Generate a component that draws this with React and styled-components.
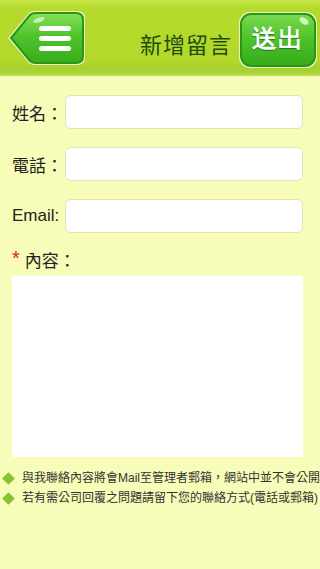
import React from "react";
import styled, { createGlobalStyle } from "styled-components";

const Global = createGlobalStyle`
  html, body {
    margin: 0;
    padding: 0;
    background: #f7fcb8;
  }
  body {
    font-family: "Liberation Sans", "Noto Sans CJK TC", sans-serif;
  }
  * { box-sizing: border-box; }
`;

const Page = styled.div`
  width: 320px;
  min-height: 569px;
  background: #f7fcb8;
  overflow: hidden;
`;

const Header = styled.header`
  height: 76px;
  display: flex;
  align-items: center;
  justify-content: space-between;
  padding: 2px 2px 2px 5px;
  background:
    linear-gradient(to bottom, #c8e84a 0, #b6da2c 7px, #b3d72a 62px, #a7d130 66px, #a9d232 72px, #bfe055 76px);
`;

const Title = styled.h1`
  margin: 10px 6px 0 auto;
  font-size: 22px;
  font-weight: normal;
  letter-spacing: 1px;
  color: #1f4e0c;
`;

const IconButton = styled.button`
  border: none;
  background: none;
  padding: 0;
  width: ${p => p.$w}px;
  height: 58px;
  margin-top: ${p => p.$top || 0}px;
  display: flex;
  align-items: center;
  justify-content: center;
  position: relative;
  cursor: pointer;
  svg { display: block; }
`;

const SendLabel = styled.span`
  position: absolute;
  inset: 0;
  display: flex;
  align-items: center;
  justify-content: center;
  padding-bottom: 3px;
  color: #fff;
  font-size: 25px;
  font-weight: bold;
  letter-spacing: 1px;
  text-shadow: 0 1px 1px #1f7a10;
`;

const Form = styled.main`
  padding: 19px 17px 0 12px;
  display: flex;
  flex-direction: column;
`;

const Row = styled.div`
  display: flex;
  align-items: center;
  margin-bottom: 18px;
`;

const Label = styled.label`
  width: 53px;
  flex: none;
  font-size: 17px;
  color: #222;
  white-space: nowrap;
`;

const Input = styled.input`
  flex: 1;
  height: 34px;
  border: 1px solid #e2e4b8;
  border-radius: 6px;
  background: #fff;
  padding: 0 8px;
  font-size: 15px;
  outline: none;
`;

const ContentLabel = styled.label`
  font-size: 17px;
  color: #222;
  margin-top: -4px;
  margin-bottom: 4px;
  display: flex;
  align-items: center;
`;

const Star = styled.span`
  color: #e02020;
  font-size: 20px;
  margin-right: 5px;
  position: relative;
  top: -1px;
`;

const TextArea = styled.textarea`
  height: 181px;
  border: none;
  background: #fff;
  resize: none;
  outline: none;
  padding: 6px;
  font-size: 15px;
`;

const Notes = styled.ul`
  list-style: none;
  margin: 14px 0 0;
  padding: 0 0 0 2px;
  display: flex;
  flex-direction: column;
  gap: 5px;
`;

const Note = styled.li`
  display: flex;
  align-items: center;
  gap: 8px;
  font-size: 12px;
  color: #333;
  white-space: nowrap;
  line-height: 15px;
`;

const Diamond = styled.span`
  width: 9px;
  height: 9px;
  margin: 0 1px 0 2px;
  background: #84c42c;
  transform: rotate(45deg);
  flex: none;
`;

const MenuIcon = () => (
  <svg width="82" height="58" viewBox="0 0 82 58">
    <defs>
      <linearGradient id="mg" x1="0" y1="0" x2="0" y2="1">
        <stop offset="0" stopColor="#86e05a" />
        <stop offset="0.45" stopColor="#4fc42a" />
        <stop offset="1" stopColor="#38ad1c" />
      </linearGradient>
    </defs>
    <path d="M3 29 L24 4 Q26 2 30 2 L72 2 Q80 2 80 10 L80 48 Q80 56 72 56 L30 56 Q26 56 24 54 Z" fill="#e9f7c8" />
    <path d="M6 29 L25 6 Q27 4 31 4 L71 4 Q78 4 78 11 L78 47 Q78 54 71 54 L31 54 Q27 54 25 52 Z" fill="url(#mg)" stroke="#2a9614" strokeWidth="2" />
    <ellipse cx="34" cy="11" rx="6" ry="2.5" fill="#d6f7c0" opacity="0.8" transform="rotate(-20 34 11)" />
    <rect x="34" y="17" width="32" height="5" rx="2.5" fill="#fff" />
    <rect x="34" y="27" width="32" height="5" rx="2.5" fill="#fff" />
    <rect x="34" y="37" width="32" height="5" rx="2.5" fill="#fff" />
  </svg>
);

const SendBg = () => (
  <svg width="80" height="58" viewBox="0 0 80 58">
    <defs>
      <linearGradient id="sg" x1="0" y1="0" x2="0" y2="1">
        <stop offset="0" stopColor="#7ad94e" />
        <stop offset="0.5" stopColor="#4cc22a" />
        <stop offset="1" stopColor="#35aa1b" />
      </linearGradient>
    </defs>
    <rect x="1" y="1" width="78" height="56" rx="11" fill="#e9f7c8" />
    <rect x="3" y="3" width="74" height="52" rx="10" fill="url(#sg)" stroke="#2a9614" strokeWidth="2" />
    <ellipse cx="66" cy="10" rx="5" ry="3" fill="#e6fbd8" opacity="0.85" transform="rotate(35 66 10)" />
  </svg>
);

export default function App() {
  return (
    <Page>
      <Global />
      <Header>
        <IconButton $w={82} aria-label="menu">
          <MenuIcon />
        </IconButton>
        <Title>新增留言</Title>
        <IconButton $w={80} $top={3}>
          <SendBg />
          <SendLabel>送出</SendLabel>
        </IconButton>
      </Header>
      <Form>
        <Row>
          <Label>姓名：</Label>
          <Input />
        </Row>
        <Row>
          <Label>電話：</Label>
          <Input />
        </Row>
        <Row>
          <Label>Email:</Label>
          <Input />
        </Row>
        <ContentLabel>
          <Star>*</Star>內容：
        </ContentLabel>
        <TextArea />
      </Form>
      <Notes>
        <Note><Diamond />與我聯絡內容將會Mail至管理者郵箱，網站中並不會公開</Note>
        <Note><Diamond />若有需公司回覆之問題請留下您的聯絡方式(電話或郵箱)</Note>
      </Notes>
    </Page>
  );
}
